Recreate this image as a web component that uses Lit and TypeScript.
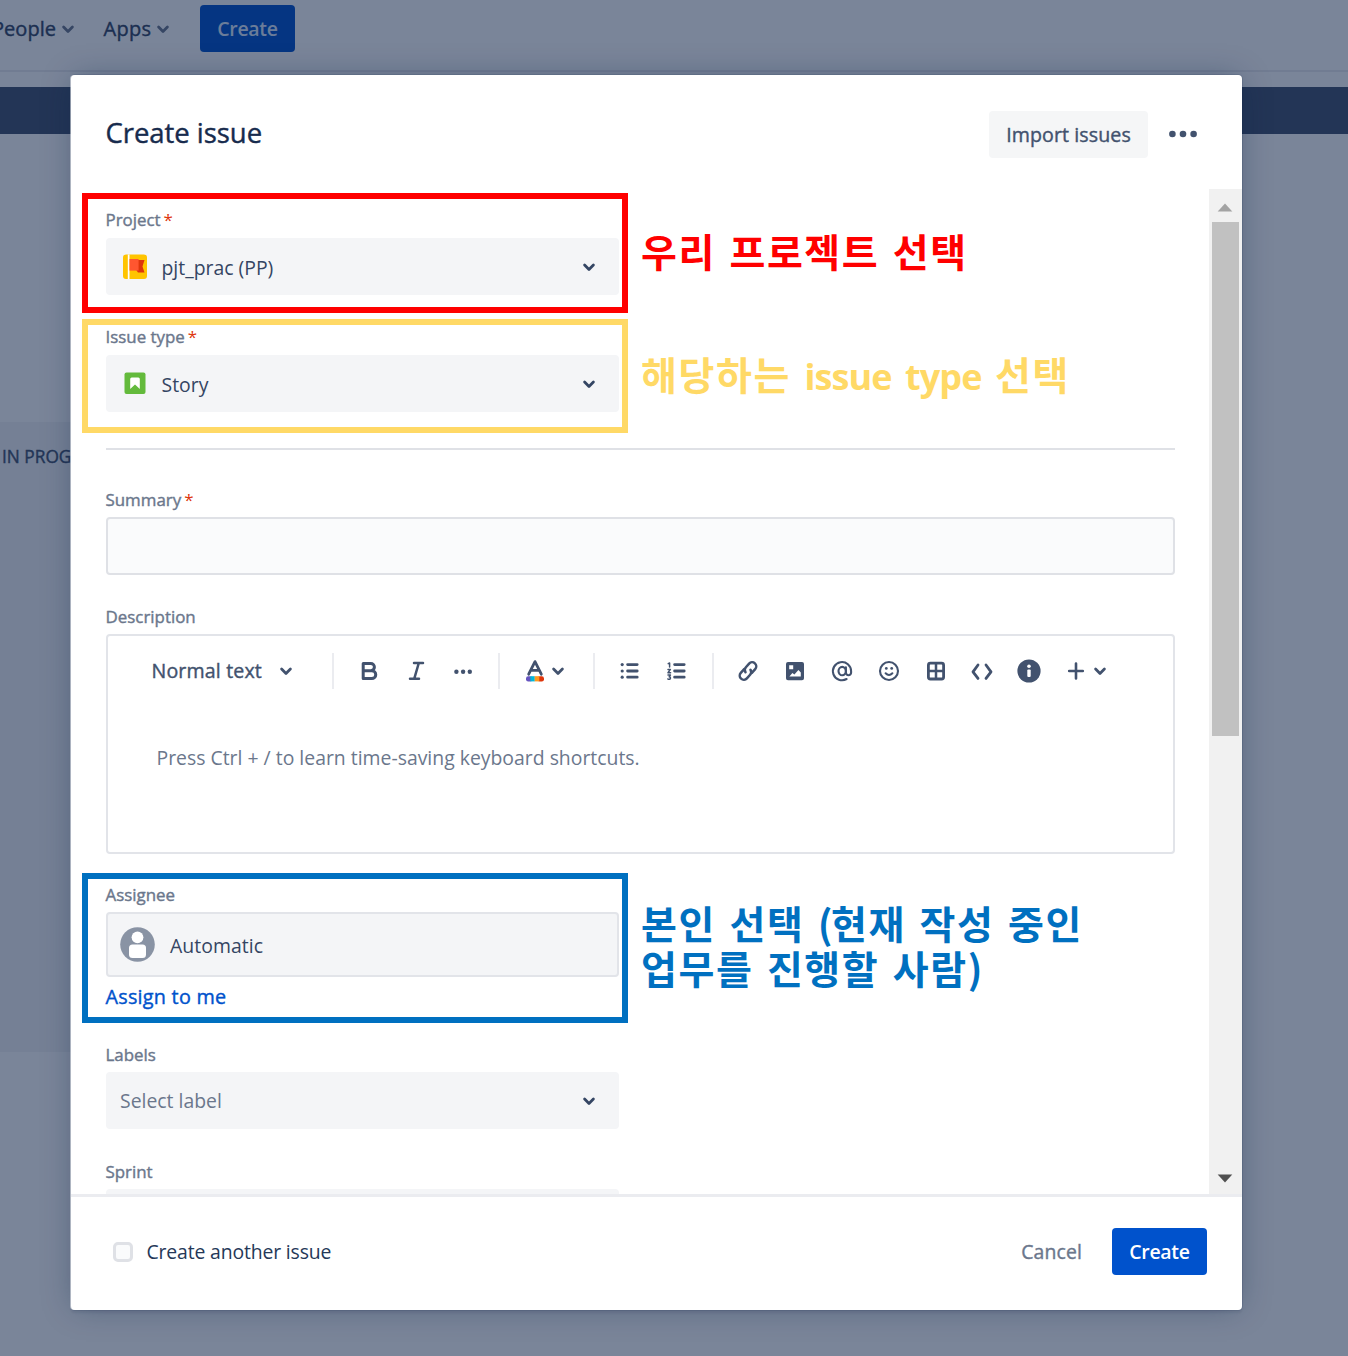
import { LitElement, html, css, svg, nothing } from "lit";
import { customElement } from "lit/decorators.js";

const box = (s: number, body: unknown) => html`<svg class="ico" width=${s} height=${s} viewBox="${-s / 2} ${-s / 2} ${s} ${s}">${body}</svg>`;
const line = (d: string, w = 2.6) => svg`<path d=${d} fill="none" stroke="currentColor" stroke-width=${w} stroke-linecap="round" stroke-linejoin="round"/>`;
const solid = (d: string) => svg`<path d=${d} fill="currentColor" fill-rule="evenodd"/>`;

const chevron = () => box(14, line("M-4.4 -2 L0 2.4 L4.4 -2", 2.8));

const icons: Record<string, unknown> = {
  bold: line("M-5.8 -7.5 H1.8 A3.6 3.6 0 0 1 1.8 -0.3 H-5.8 Z M-5.8 -0.3 H2.8 A3.7 3.7 0 0 1 2.8 7.6 H-5.8 Z", 3),
  italic: line("M-2 -8 H7 M-6 7.8 H3 M2.8 -8 L-1.8 7.8", 2.5),
  dots: svg`<circle cx="-6.6" cy="0.7" r="2.2" fill="currentColor"/><circle cx="0.1" cy="0.7" r="2.2" fill="currentColor"/><circle cx="6.8" cy="0.7" r="2.2" fill="currentColor"/>`,
  color: svg`${line("M-6.3 3.2 L0 -9.4 L6.3 3.2 M-4 -0.6 H4", 2.8)}
    <rect x="-9" y="5.2" width="6.5" height="5.2" rx="2.2" fill="#6554c0"/><rect x="-4.6" y="5.2" width="4.4" height="5.2" fill="#00b8d9"/>
    <rect x="2.5" y="5.2" width="6.5" height="5.2" rx="2.2" fill="#de350b"/><rect x="-0.3" y="5.2" width="4.6" height="5.2" fill="#ff991f"/>`,
  bullets: svg`${line("M-1.4 -6.4 H8.2 M-1.4 0 H8.2 M-1.4 6.2 H8.2", 2.8)}
    <circle cx="-6.8" cy="-6.4" r="1.6" fill="currentColor"/><circle cx="-6.8" cy="0" r="1.6" fill="currentColor"/><circle cx="-6.8" cy="6.2" r="1.6" fill="currentColor"/>`,
  numbers: svg`${line("M-1.4 -6.4 H8.2 M-1.4 0 H8.2 M-1.4 6.2 H8.2", 2.8)}
    ${line("M-7.8 -7.4 L-6.4 -8 V-4 M-8 -1.6 H-5.6 L-8 1.8 H-5.4 M-8 4 H-5.6 L-6.8 5.8 Q-5 6.2 -5.8 7.8 Q-7 8.8 -8.2 8", 1.5)}`,
  link: svg`<g transform="rotate(-48)">${line("M-1.2 -4.1 H-6.2 A4.1 4.1 0 0 0 -6.2 4.1 H-1.4 A4.1 4.1 0 0 0 2.6 1", 2.5)}
    ${line("M1.2 4.1 H6.2 A4.1 4.1 0 0 0 6.2 -4.1 H1.4 A4.1 4.1 0 0 0 -2.6 -1", 2.5)}</g>`,
  image: solid("M-7 -9 H7 A2 2 0 0 1 9 -7 V7.2 A2 2 0 0 1 7 9.2 H-7 A2 2 0 0 1 -9 7.2 V-7 A2 2 0 0 1 -7 -9 Z M-5.8 -5.8 V-1.8 H-1.8 V-5.8 Z M-5.6 5.6 H5.8 V1.6 L3.4 -1 L-0.6 3.6 L-2.6 2 Z"),
  mention: svg`${line("M4.6 8 A9.1 9.1 0 1 1 9.1 0.2 V1.6 A2.5 2.5 0 0 1 3.9 1.6 V-3.8", 2.1)}<ellipse cx="0.2" cy="0.1" rx="3.7" ry="4.2" fill="none" stroke="currentColor" stroke-width="2.1"/>`,
  emoji: svg`<circle r="9" fill="none" stroke="currentColor" stroke-width="2.1"/>${line("M-3.4 2.2 Q0 5.8 3.4 2.2", 2)}<circle cx="-2.7" cy="-2.6" r="1.4" fill="currentColor"/><circle cx="2.7" cy="-2.6" r="1.4" fill="currentColor"/>`,
  table: svg`<rect x="-7.6" y="-7.8" width="15.2" height="15.8" rx="2" fill="none" stroke="currentColor" stroke-width="2.8"/>${line("M0 -7 V7 M-7 0.1 H7", 2.5)}`,
  code: line("M-4 -6 L-9 0.8 L-4 7.4 M4 -6 L9 0.8 L4 7.4", 2.8),
  info: svg`<circle r="11.6" fill="currentColor"/><circle cx="0" cy="-4.8" r="1.8" fill="#fff"/><rect x="-1.7" y="-1.6" width="3.4" height="7.6" rx="1" fill="#fff"/>`,
  plus: line("M-6.8 0 H6.8 M0 -7.4 V7.4", 2.6),
};

@customElement("app-root")
export class AppRoot extends LitElement {
  static styles = css`
    :host { display: block; position: relative; width: 1348px; height: 1356px; overflow: hidden; background: #fff;
      font-family: "Open Sans", "Noto Sans", sans-serif; font-size: 19.4px; color: #172b4d; }
    * { box-sizing: border-box; }
    .ico { display: block; flex: none; overflow: visible; }
    .t { display: inline-block; white-space: nowrap; }
    .medium { -webkit-text-stroke: 0.4px currentColor; }
    .nav { height: 72px; display: flex; align-items: flex-start; border-bottom: 2px solid #ebecf0; color: #344563; font-size: 20px; }
    .navitem { height: 57px; display: flex; align-items: center; gap: 5px; }
    .navitem .ico { color: #6b778c; }
    .people { width: 103px; margin-left: -8px; }
    .people .t { letter-spacing: 0.05px; }
    .apps { width: 97px; margin-left: 8.5px; margin-right: -0.5px; }
    .apps .t { letter-spacing: 0.3px; }
    .btn { height: 47px; border-radius: 4px; display: flex; align-items: center; justify-content: center; }
    .primary { width: 95px; background: #0052cc; color: #fff; font-weight: 600; font-size: 19.5px; letter-spacing: -0.3px; }
    .nav .primary { margin-top: 5px; color: #deebff; }
    .banner { margin-top: 15px; height: 47px; background: #42526e; }
    .column { margin-top: 288px; width: 200px; height: 630px; background: #f4f5f7; padding: 21px 0 0 2px; color: #42526e; font-size: 17.3px; line-height: 28px; }
    .blanket { position: absolute; inset: 0; background: rgba(9, 30, 66, 0.54); }
    .modal { position: absolute; left: 70.5px; top: 75px; width: 1171px; height: 1235px; border-radius: 4px; background: #fff; display: flex; flex-direction: column;
      box-shadow: -1px 0 0 rgba(255, 255, 255, 0.5), 0 0 0 1px rgba(9, 30, 66, 0.1), 0 3px 2px rgba(9, 30, 66, 0.08), 0 0 30px -4px rgba(9, 30, 66, 0.36); }
    .head { height: 114px; padding: 5px 35px 0 35px; display: flex; align-items: center; }
    .title { font-size: 27.5px; flex: 1; line-height: 40px; margin-top: -3px; }
    .title .t { letter-spacing: -0.05px; }
    .import { width: 159px; background: #f5f6f7; color: #42526e; font-size: 19.6px; letter-spacing: 0.1px; }
    .more { width: 47px; margin-left: 11.5px; margin-top: -1px; display: flex; justify-content: center; color: #42526e; }
    .body { height: 1004.5px; display: flex; overflow: hidden; }
    .form { width: 1138.5px; padding: 14px 34.5px 0 35px; overflow: hidden; }
    .label { height: 35px; line-height: 34px; font-size: 16.9px; color: #6b778c; display: flex; gap: 3px; }
    .low .label { line-height: 35.5px; }
    .req { color: #de350b; }
    .field { margin-bottom: 25px; }
    .select { width: 513px; height: 57px; border-radius: 4px; background: #f4f5f7; padding: 0 23px 0 14px; display: flex; align-items: center; color: #344563; }
    .select .value { flex: 1; padding-top: 1px; }
    .select.muted .value { color: #6b778c; padding: 0 0 1px 0.5px; }
    .lead { width: 30px; margin-right: 12px; display: flex; justify-content: center; }
    .rule { height: 2px; background: #dfe1e6; margin: 36px 0 32px; }
    .input { height: 58px; border: 2px solid #dfe1e6; border-radius: 4px; background: #fafbfc; }
    .field.sum { margin-bottom: 24px; }
    .editor { height: 220px; border: 2px solid #e2e4e9; border-radius: 4px; }
    .tools { display: flex; align-items: center; height: 70px; color: #42526e; padding-left: 44px; }
    .style { width: 182.5px; height: 36px; display: flex; align-items: center; gap: 17px; font-size: 19.6px; letter-spacing: 0.15px; border-right: 2px solid #ebecf0; }
    .style .t { margin-top: -1px; }
    .group { height: 36px; display: flex; align-items: center; border-right: 2px solid #ebecf0; }
    .group.last { border: 0; }
    .tool { width: 46.8px; display: flex; justify-content: center; }
    .g1 { width: 166px; padding-left: 12px; } .g2 { width: 95px; padding-left: 23px; gap: 4px; } .g3 { width: 119px; padding-left: 11px; } .g4 { padding-left: 11px; }
    .drop { margin-left: -6.5px; }
    .hint { padding: 38px 0 0 49px; line-height: 28px; color: #6b778c; }
    .select.assignee { height: 65px; border: 2px solid #e2e4e9; padding-left: 12px; letter-spacing: 0.05px; }
    .assignee .lead { width: 35px; margin-right: 15.5px; }
    .assignee .t { padding-top: 1px; }
    .link { height: 40px; line-height: 40px; color: #0052cc; font-size: 19.8px; letter-spacing: 0.25px; }
    .field.desc { margin-bottom: 23px; } .field.who { margin-bottom: 20px; }
    .scroll { width: 32.5px; background: #f1f1f1; display: flex; flex-direction: column; align-items: center; justify-content: space-between; }
    .thumb { width: 27px; height: 514px; background: #c1c1c1; margin-bottom: auto; }
    .arrow { height: 33px; display: flex; align-items: center; color: #a3a3a3; } .arrow.down { color: #505050; }
    .foot { flex: 1; border-top: 3px solid #ebecf0; display: flex; align-items: center; padding: 0 34.5px 3.5px 42.5px; }
    .check { width: 20px; height: 20px; border: 3px solid #dfe1e6; border-radius: 5px; background: #fafbfc; margin-right: 13.5px; }
    .another { letter-spacing: -0.15px; color: #253858; }
    .grow { flex: 1; }
    .cancel { color: #6b778c; margin-right: 30px; letter-spacing: 0.15px; }
    .mark { position: absolute; left: 82px; width: 546px; border: 6px solid; }
    .note { position: absolute; left: 641px; white-space: nowrap; font-family: "Noto Sans CJK KR", sans-serif; font-weight: 700; font-size: 39px; line-height: 45px; letter-spacing: 1.6px; word-spacing: 3px; }
    .note .latin { font-family: "Open Sans", sans-serif; font-size: 36px; letter-spacing: -0.9px; word-spacing: 5px; }
    .note .paren { letter-spacing: -1.5px; }
    .red { color: #f00; border-color: #f00; } .yellow { color: #ffd966; border-color: #ffd966; } .blue { color: #0070c0; border-color: #0070c0; }
    .m1 { top: 193px; height: 120px; } .m2 { top: 319px; height: 114px; } .m3 { top: 873px; height: 150px; }
    .n1 { top: 228px; } .n2 { top: 351px; } .n3 { top: 900px; }
  `;

  label(text: string, required = false) {
    return html`<div class="label"><span class="t medium">${text}</span>${required ? html`<span class="req">*</span>` : nothing}</div>`;
  }

  tool(name: string) {
    return html`<span class="tool">${box(24, icons[name])}</span>`;
  }

  render() {
    return html`
      <div class="nav">
        <div class="navitem people"><span class="t medium">People</span>${chevron()}</div>
        <div class="navitem apps"><span class="t medium">Apps</span>${chevron()}</div>
        <div class="btn primary"><span class="t">Create</span></div>
      </div>
      <div class="banner"></div>
      <div class="column"><span class="t medium">IN PROG</span></div>
      <div class="blanket"></div>

      <div class="modal">
        <div class="head">
          <div class="title"><span class="t medium">Create issue</span></div>
          <div class="btn import"><span class="t medium">Import issues</span></div>
          <div class="more">${box(30, svg`<circle cx="-10.6" r="3.3" fill="currentColor"/><circle r="3.3" fill="currentColor"/><circle cx="10.6" r="3.3" fill="currentColor"/>`)}</div>
        </div>
        <div class="body">
          <div class="form">
            <div class="field">${this.label("Project", true)}
              <div class="select"><span class="lead">${box(24, svg`<rect x="-12" y="-12.5" width="24" height="24.5" rx="3" fill="#ffc400"/>
                <rect x="-7.2" y="-12.5" width="1.7" height="24.5" fill="#fff"/><path d="M1.5 -7 H9.5 L7.5 -0.5 L9.5 5.4 H3 L1.5 3.6 Z" fill="#de350b"/><path d="M-5.5 -8 H3.6 V3.6 H-5.5 Z" fill="#ff5630"/>`)}</span>
                <span class="value"><span class="t">pjt_prac (PP)</span></span>${chevron()}</div></div>
            <div class="field">${this.label("Issue type", true)}
              <div class="select"><span class="lead">${box(22, svg`<rect x="-10.5" y="-11.5" width="21" height="21.5" rx="2" fill="#63ba3c"/>
                <path d="M-4.8 5 V-5 Q-4.8 -6.5 -3.3 -6.5 H3.3 Q4.8 -6.5 4.8 -5 V5 L0 0.4 Z" fill="#fff"/>`)}</span>
                <span class="value"><span class="t">Story</span></span>${chevron()}</div></div>
            <div class="rule"></div>
            <div class="field low sum">${this.label("Summary", true)}<div class="input"></div></div>
            <div class="field desc low">${this.label("Description")}
              <div class="editor">
                <div class="tools">
                  <div class="style"><span class="t medium">Normal text</span>${chevron()}</div>
                  <div class="group g1">${this.tool("bold")}${this.tool("italic")}${this.tool("dots")}</div>
                  <div class="group g2">${box(24, icons.color)}${chevron()}</div>
                  <div class="group g3">${this.tool("bullets")}${this.tool("numbers")}</div>
                  <div class="group g4 last">${["link", "image", "mention", "emoji", "table", "code", "info", "plus"].map((n) => this.tool(n))}<span class="drop">${chevron()}</span></div>
                </div>
                <div class="hint"><span class="t">Press Ctrl + / to learn time-saving keyboard shortcuts.</span></div>
              </div></div>
            <div class="field who low">${this.label("Assignee")}
              <div class="select assignee"><span class="lead">${box(35, svg`<circle r="17.3" fill="#8993a4"/><circle cy="-7.2" r="5.9" fill="#fff"/><rect x="-8.5" y="0" width="17" height="13.5" rx="3.5" fill="#fff"/>`)}</span><span class="t">Automatic</span></div>
              <div class="link"><span class="t medium">Assign to me</span></div></div>
            <div class="field low">${this.label("Labels")}
              <div class="select muted"><span class="value"><span class="t">Select label</span></span>${chevron()}</div></div>
            <div class="field low">${this.label("Sprint")}<div class="select"></div></div>
          </div>
          <div class="scroll">
            <div class="arrow">${box(16, svg`<path d="M-7.3 5.5 L0 -2.5 L7.3 5.5 Z" fill="currentColor"/>`)}</div>
            <div class="thumb"></div>
            <div class="arrow down">${box(16, svg`<path d="M-7.3 -2.5 L0 5.5 L7.3 -2.5 Z" fill="currentColor"/>`)}</div>
          </div>
        </div>
        <div class="foot">
          <span class="check"></span><span class="t another">Create another issue</span><span class="grow"></span>
          <span class="t cancel medium">Cancel</span>
          <div class="btn primary"><span class="t">Create</span></div>
        </div>
      </div>

      <div class="mark m1 red"></div><div class="mark m2 yellow"></div><div class="mark m3 blue"></div>
      <div class="note n1 red">우리 프로젝트 선택</div>
      <div class="note n2 yellow">해당하는 <span class="latin">issue type</span> 선택</div>
      <div class="note n3 blue">본인 선택 <span class="paren">(</span>현재 작성 중인<br />업무를 진행할 사람)</div>
    `;
  }
}
